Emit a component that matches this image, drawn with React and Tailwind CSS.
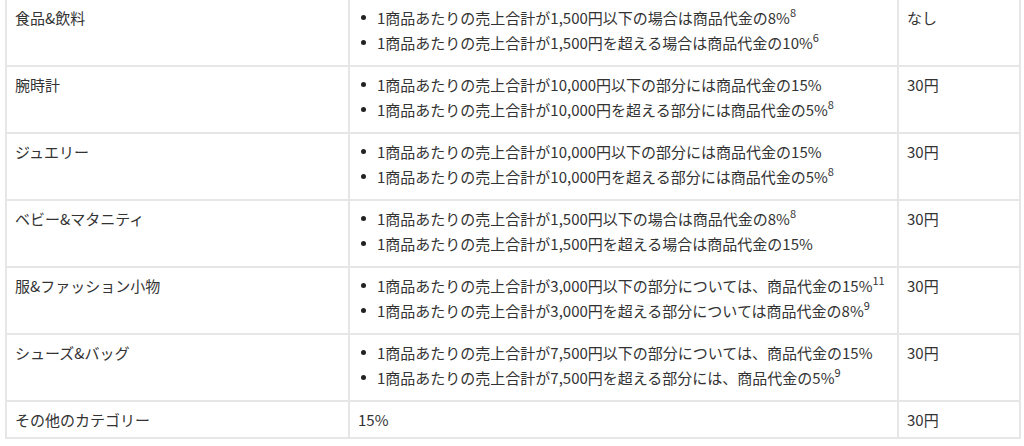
const rows = [
  {
    name: '食品&飲料',
    items: [
      ['1商品あたりの売上合計が1,500円以下の場合は商品代金の8%', '8'],
      ['1商品あたりの売上合計が1,500円を超える場合は商品代金の10%', '6'],
    ],
    fee: 'なし',
  },
  {
    name: '腕時計',
    items: [
      ['1商品あたりの売上合計が10,000円以下の部分には商品代金の15%', null],
      ['1商品あたりの売上合計が10,000円を超える部分には商品代金の5%', '8'],
    ],
    fee: '30円',
  },
  {
    name: 'ジュエリー',
    items: [
      ['1商品あたりの売上合計が10,000円以下の部分には商品代金の15%', null],
      ['1商品あたりの売上合計が10,000円を超える部分には商品代金の5%', '8'],
    ],
    fee: '30円',
  },
  {
    name: 'ベビー&マタニティ',
    items: [
      ['1商品あたりの売上合計が1,500円以下の場合は商品代金の8%', '8'],
      ['1商品あたりの売上合計が1,500円を超える場合は商品代金の15%', null],
    ],
    fee: '30円',
  },
  {
    name: '服&ファッション小物',
    items: [
      ['1商品あたりの売上合計が3,000円以下の部分については、商品代金の15%', '11'],
      ['1商品あたりの売上合計が3,000円を超える部分については商品代金の8%', '9'],
    ],
    fee: '30円',
  },
  {
    name: 'シューズ&バッグ',
    items: [
      ['1商品あたりの売上合計が7,500円以下の部分については、商品代金の15%', null],
      ['1商品あたりの売上合計が7,500円を超える部分には、商品代金の5%', '9'],
    ],
    fee: '30円',
  },
];

function Cell({ children }) {
  return (
    <td className="border-2 border-[#e6e6e6] align-top pl-[8px] pr-[8px] pt-[5px]">
      {children}
    </td>
  );
}

export default function App() {
  return (
    <div
      className="bg-white h-[446px] overflow-hidden pl-[5px] pr-[5px] text-[15px] text-[#333333]"
      style={{ fontFamily: '"Noto Sans CJK JP", "Noto Sans", sans-serif' }}
    >
      <table className="-mt-[2px] w-[1014px] table-fixed border-collapse">
        <colgroup>
          <col className="w-[343px]" />
          <col className="w-[549px]" />
          <col className="w-[122px]" />
        </colgroup>
        <tbody>
          {rows.map((r) => (
            <tr key={r.name} className="h-[67px]">
              <Cell>
                <div className="leading-[25px]">{r.name}</div>
              </Cell>
              <Cell>
                <ul className="pl-[3px]">
                  {r.items.map(([text, note]) => (
                    <li key={text} className="flex items-center leading-[25px] whitespace-nowrap">
                      <span className="mr-[11px] h-[5px] w-[5px] shrink-0 rounded-full bg-[#222222]" />
                      <span>
                        {text}
                        {note && (
                          <span className="text-[11px] leading-none align-top relative top-[2px]">{note}</span>
                        )}
                      </span>
                    </li>
                  ))}
                </ul>
              </Cell>
              <Cell>
                <div className="leading-[25px]">{r.fee}</div>
              </Cell>
            </tr>
          ))}
          <tr className="h-[37px]">
            <Cell>
              <div className="leading-[25px]">その他のカテゴリー</div>
            </Cell>
            <Cell>
              <div className="leading-[25px]">15%</div>
            </Cell>
            <Cell>
              <div className="leading-[25px]">30円</div>
            </Cell>
          </tr>
        </tbody>
      </table>
    </div>
  );
}
